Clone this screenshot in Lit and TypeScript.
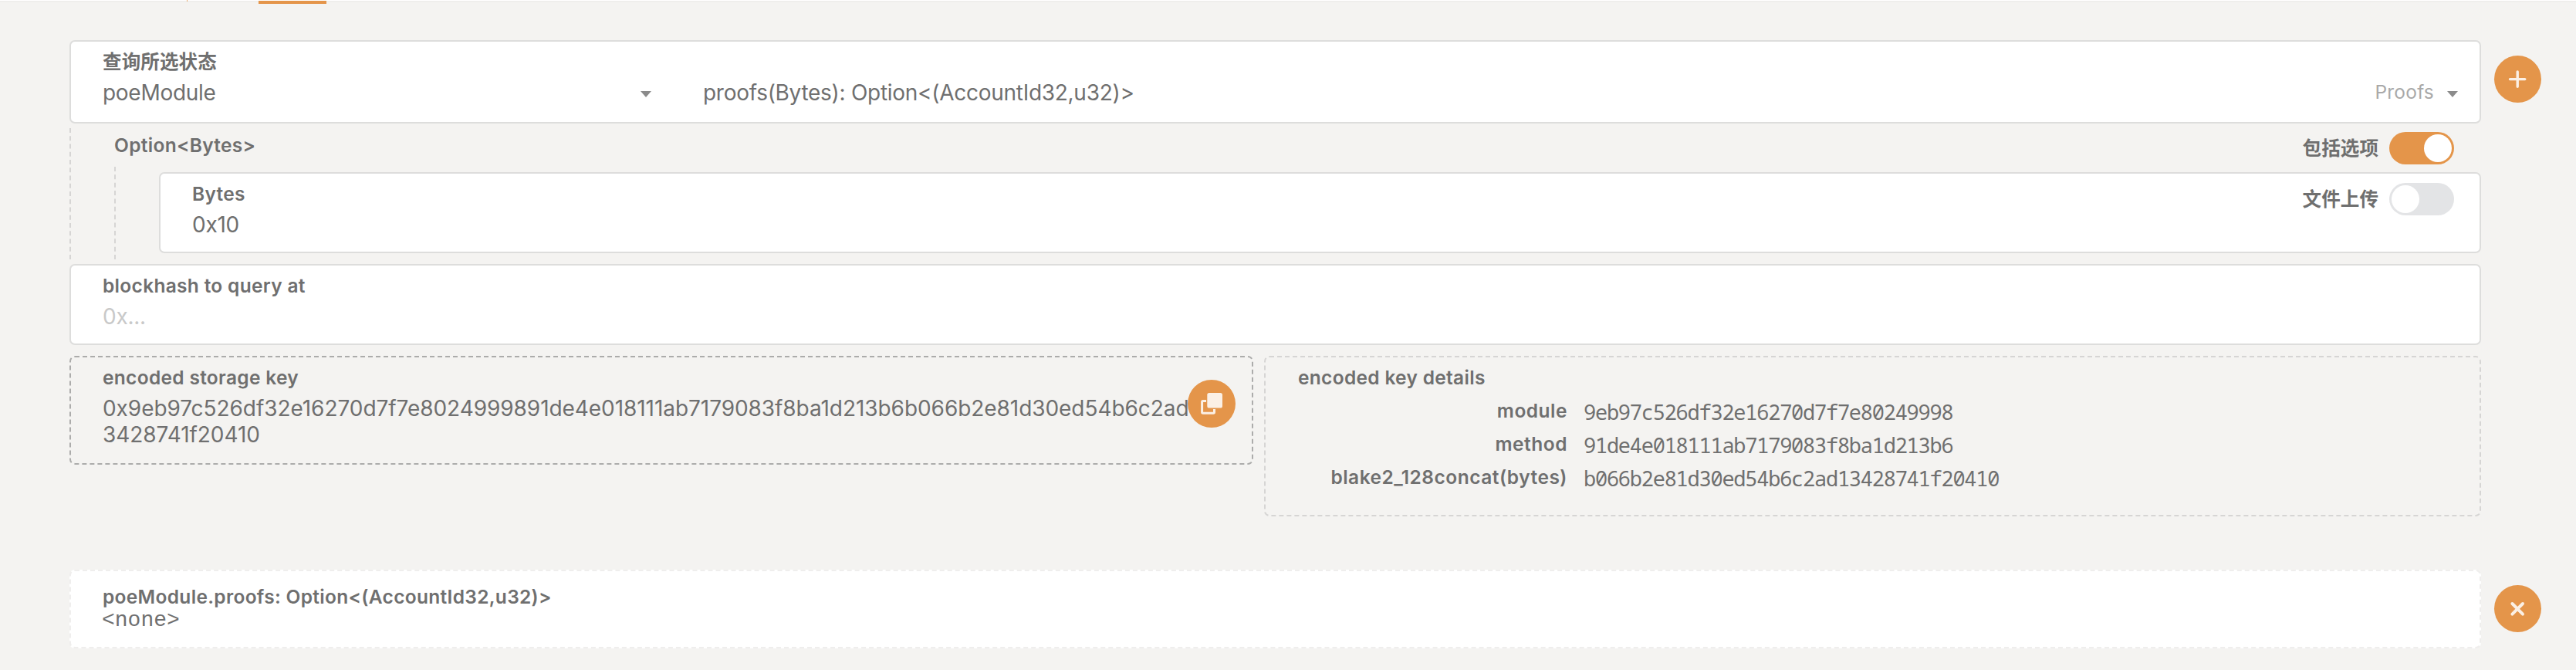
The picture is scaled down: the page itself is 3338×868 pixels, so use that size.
import { LitElement, html, css, svg } from "lit";
import { customElement, property } from "lit/decorators.js";
import { classMap } from "lit/directives/class-map.js";

const ICONS = {
  plus: svg`<path d="M30.2 21v19.2M20.5 30.6h19.3" stroke-width="3.4" stroke-linecap="round"/>`,
  close: svg`<path d="M23.4 24l13.6 13.6M37 24l-13.6 13.6" stroke-width="4" stroke-linecap="round"/>`,
  copy: svg`<path d="M24 27.5H19.8a1.2 1.2 0 0 0-1.2 1.2V42.1a1.2 1.2 0 0 0 1.2 1.2H33.3a1.2 1.2 0 0 0 1.2-1.2V38" stroke-width="3"/><rect x="25.3" y="17" width="19.7" height="19.5" rx="2.6" fill="#fbf0e5" stroke="none"/>`,
};

@customElement("round-button")
class RoundButton extends LitElement {
  @property() icon: keyof typeof ICONS = "plus";
  static styles = css`
    :host { display: block; width: 61px; height: 61px; border-radius: 50%; background: #e4954a; }
    :host([icon="copy"]) { width: 62px; height: 62px; }
    .glyph { display: block; fill: none; stroke: #fbf0e5; }
  `;
  render() {
    return html`<svg class="glyph" width="61" height="61" viewBox="0 0 61 61">${ICONS[this.icon]}</svg>`;
  }
}

@customElement("toggle-switch")
class ToggleSwitch extends LitElement {
  @property() label = "";
  @property({ type: Boolean }) on = false;
  static styles = css`
    :host { display: flex; align-items: center; gap: 14px; height: 42px; }
    .label { font-weight: 600; font-size: 24.6px; line-height: 30px; }
    .track { box-sizing: border-box; display: flex; width: 84px; height: 42px; padding: 3px; border-radius: 21px; background: #e3e4e6; }
    .track.on { justify-content: flex-end; background: #e4954a; }
    .knob { width: 36px; height: 36px; border-radius: 50%; background: #fff; }
  `;
  render() {
    return html`<span class="label">${this.label}</span>
      <div class=${classMap({ track: true, on: this.on })}><div class="knob"></div></div>`;
  }
}

const KEY_PARTS = [
  { name: "module", hex: "9eb97c526df32e16270d7f7e80249998" },
  { name: "method", hex: "91de4e018111ab7179083f8ba1d213b6" },
  { name: "blake2_128concat(bytes)", hex: "b066b2e81d30ed54b6c2ad13428741f20410" },
];
const STORAGE_KEY =
  "0x9eb97c526df32e16270d7f7e8024999891de4e018111ab7179083f8ba1d213b6b066b2e81d30ed54b6c2ad13428741f20410";

@customElement("app-root")
class AppRoot extends LitElement {
  static styles = css`
    :host {
      display: block; box-sizing: border-box; height: 868px; overflow: hidden;
      background: #f4f3f1; color: #6f6f6f;
      font-family: Inter, "Noto Sans CJK SC", sans-serif;
    }
    * { box-sizing: border-box; }
    .tabs { height: 5px; display: flex; background: linear-gradient(#fff 1px, #efeeec 1px, #efeeec 3px, transparent 3px); }
    .tick { width: 1px; height: 2px; margin-left: 242px; background: #e9ab70; }
    .active { width: 88px; height: 4px; margin: 1px 0 0 92px; background: #e4954a; }
    .page { display: grid; grid-template-columns: 3125px 61px; column-gap: 17px; padding: 47px 0 0 90px; }
    .side { margin-top: 20px; }
    .box { height: 105px; padding: 11px 0 0 41px; background: #fff; border: 2px solid #dddddc; border-radius: 7px; }
    .label { font-size: 24.5px; font-weight: 600; line-height: 30px; letter-spacing: 0.31px; white-space: nowrap; }
    .value { font-size: 28px; line-height: 33.6px; letter-spacing: -0.28px; white-space: nowrap; }
    .label + .value { margin-top: 9px; }
    .placeholder { color: #c9c9c9; }
    .query { height: 108px; }
    .zh { letter-spacing: 0.15px; }
    .selects { display: flex; margin-top: 9px; }
    .module { width: 778px; display: flex; }
    .call { flex: 1; display: flex; }
    .call .value { flex: 1; }
    .hint { font-size: 24.5px; line-height: 31px; letter-spacing: 0.2px; color: #a9a9a9; }
    .caret { width: 14px; height: 8px; margin-top: 14px; background: #8b8b8b; clip-path: polygon(0 0, 100% 0, 50% 100%); }
    .module .caret { margin-left: auto; margin-right: 67px; }
    .call .caret { margin-left: 17px; margin-right: 28px; }
    .nest { border-left: 2px dashed #d6d5d4; }
    .outer { height: 170px; margin-top: 6px; padding-left: 56px; }
    .option { display: flex; justify-content: space-between; height: 50px; padding: 5px 35px 0 0; }
    .option .label { margin: 2px 0 0 0; }
    .inner { height: 120px; padding: 7px 0 0 56px; }
    .bytes { display: flex; justify-content: space-between; padding-right: 33px; }
    .bytes toggle-switch { margin-top: 1px; }
    .block { margin-top: 6px; }
    .keys { display: flex; align-items: flex-start; gap: 14px; margin-top: 14px; }
    .dashed { padding-top: 11px; border: 2px dashed #d6d5d4; border-radius: 7px; }
    .storage { position: relative; width: 1534px; height: 141px; padding-left: 41px; border-color: #acacab; }
    .storage .value { width: 1425px; white-space: normal; word-break: break-all; letter-spacing: -0.06px; }
    .copy { position: absolute; top: 29px; right: 21px; }
    .details { width: 1577px; height: 208px; }
    .details > .label { margin-left: 42px; }
    .parts { display: grid; grid-template-columns: 391px 1fr; column-gap: 21px; grid-auto-rows: 43px; margin-top: 13px; }
    .name { text-align: right; letter-spacing: 0.5px; }
    .hex { font-family: "Noto Sans Mono", monospace; font-size: 27px; line-height: 30px; letter-spacing: -1.25px; margin-top: 2px; }
    .result { height: 102px; margin-top: 69px; padding: 18px 0 0 41px; background: #fff; border: 2px dashed #efeeed; border-radius: 7px; }
    .none { font-family: "Liberation Mono", monospace; font-size: 28px; line-height: 30px; margin: 1px 0 0 -1px; }
    .drop { margin-top: 89px; }
  `;
  render() {
    return html`
      <div class="tabs"><div class="tick"></div><div class="active"></div></div>
      <div class="page">
        <div class="form">
          <div class="box query">
            <div class="label zh">查询所选状态</div>
            <div class="selects">
              <div class="module"><span class="value">poeModule</span><i class="caret"></i></div>
              <div class="call">
                <span class="value">proofs(Bytes): Option&lt;(AccountId32,u32)&gt;</span>
                <span class="hint">Proofs</span><i class="caret"></i>
              </div>
            </div>
          </div>
          <div class="nest outer">
            <div class="option">
              <div class="label">Option&lt;Bytes&gt;</div>
              <toggle-switch label="包括选项" on></toggle-switch>
            </div>
            <div class="nest inner">
              <div class="box bytes">
                <div><div class="label">Bytes</div><div class="value">0x10</div></div>
                <toggle-switch label="文件上传"></toggle-switch>
              </div>
            </div>
          </div>
          <div class="box block">
            <div class="label">blockhash to query at</div>
            <div class="value placeholder">0x...</div>
          </div>
          <div class="keys">
            <div class="dashed storage">
              <div class="label">encoded storage key</div>
              <div class="value">${STORAGE_KEY}</div>
              <round-button class="copy" icon="copy"></round-button>
            </div>
            <div class="dashed details">
              <div class="label">encoded key details</div>
              <div class="parts">
                ${KEY_PARTS.map((p) => html`<div class="label name">${p.name}</div><div class="hex">${p.hex}</div>`)}
              </div>
            </div>
          </div>
        </div>
        <div class="side"><round-button icon="plus"></round-button></div>
        <div class="result">
          <div class="label">poeModule.proofs: Option&lt;(AccountId32,u32)&gt;</div>
          <div class="none">&lt;none&gt;</div>
        </div>
        <div class="drop"><round-button icon="close"></round-button></div>
      </div>
    `;
  }
}
